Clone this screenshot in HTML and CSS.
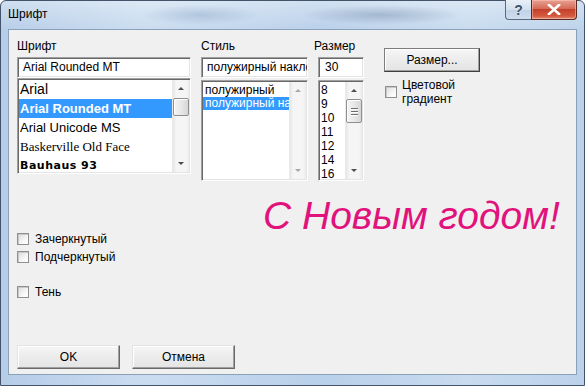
FILE: index.html
```html
<!DOCTYPE html>
<html lang="ru">
<head>
  <meta charset="UTF-8">
  <title>Шрифт</title>
  <link rel="stylesheet" href="styles.css">
</head>
<body>
  <div class="window">
    <div class="titlebar">
      <span class="title">Шрифт</span>
      <div class="caption-buttons">
        <span class="cap-btn help">?</span>
        <span class="cap-btn close">
          <svg width="14" height="11" viewBox="0 0 14 11"><path d="M2 1 L12 10 M12 1 L2 10" stroke="#fff" stroke-width="2.6" stroke-linecap="square"/></svg>
        </span>
      </div>
    </div>

    <div class="client">
      <div class="top-row">
        <!-- font family -->
        <div class="field font-field">
          <div class="label">Шрифт</div>
          <div class="edit">Arial Rounded MT</div>
          <div class="listbox font-list">
            <ul class="items">
              <li class="f-arial">Arial</li>
              <li class="f-rounded selected">Arial Rounded MT</li>
              <li class="f-unicode">Arial Unicode MS</li>
              <li class="f-bask">Baskerville Old Face</li>
              <li class="f-bauhaus">Bauhaus 93</li>
            </ul>
            <div class="scrollbar">
              <span class="arrow up"></span>
              <span class="thumb"></span>
              <span class="track"></span>
              <span class="arrow down"></span>
            </div>
          </div>
        </div>

        <!-- style -->
        <div class="field style-field">
          <div class="label">Стиль</div>
          <div class="edit">полужирный наклонный</div>
          <div class="listbox style-list">
            <ul class="items">
              <li>полужирный</li>
              <li class="selected">полужирный наклонный</li>
            </ul>
            <div class="scrollbar disabled">
              <span class="arrow up"></span>
              <span class="track"></span>
              <span class="arrow down"></span>
            </div>
          </div>
        </div>

        <!-- size -->
        <div class="field size-field">
          <div class="label">Размер</div>
          <div class="edit">30</div>
          <div class="listbox size-list">
            <ul class="items">
              <li>8</li>
              <li>9</li>
              <li>10</li>
              <li>11</li>
              <li>12</li>
              <li>14</li>
              <li>16</li>
            </ul>
            <div class="scrollbar">
              <span class="arrow up"></span>
              <span class="thumb grip"><i></i><i></i><i></i></span>
              <span class="track"></span>
              <span class="arrow down"></span>
            </div>
          </div>
        </div>

        <div class="side">
          <div class="button size-button">Размер...</div>
          <div class="check gradient-check">
            <span class="box"></span>
            <span>Цветовой<br>градиент</span>
          </div>
        </div>
      </div>

      <div class="lower">
        <div class="effects">
          <div class="check"><span class="box"></span><span>Зачеркнутый</span></div>
          <div class="check"><span class="box"></span><span>Подчеркнутый</span></div>
          <div class="check shadow-check"><span class="box"></span><span>Тень</span></div>
        </div>
        <div class="preview">С Новым годом!</div>
      </div>

      <div class="buttons">
        <div class="button">OK</div>
        <div class="button">Отмена</div>
      </div>
    </div>
  </div>
</body>
</html>
```

FILE: styles.css
```css
* {
  box-sizing: border-box;
}
html, body {
  margin: 0;
  padding: 0;
}
body {
  width: 585px;
  height: 386px;
  overflow: hidden;
  background: #fff;
  font-family: "Liberation Sans", Arial, sans-serif;
  font-size: 12px;
  color: #000;
}
.window {
  width: 585px;
  height: 386px;
  display: flex;
  flex-direction: column;
  border: 1px solid #42536a;
  border-radius: 6px 6px 0 0;
  background:
    radial-gradient(ellipse 60px 10px at 200px 14px, rgba(120,150,185,0.35), transparent),
    radial-gradient(ellipse 80px 10px at 380px 14px, rgba(90,115,150,0.35), transparent),
    linear-gradient(to bottom, rgba(255,255,255,0.35), rgba(255,255,255,0) 30px),
    linear-gradient(to right, #b6cde8, #cadcf0 25%, #b9d0ea 55%, #c8dbef 80%, #bcd2ea);
}

/* title bar */
.titlebar {
  height: 28px;
  display: flex;
  align-items: flex-start;
  padding: 0 7px;
}
.title {
  margin-top: 6px;
  line-height: 14px;
  font-size: 12px;
}
.caption-buttons {
  margin-left: auto;
  display: flex;
  height: 20px;
  margin-top: -1px;
}
.cap-btn {
  height: 20px;
  display: flex;
  align-items: center;
  justify-content: center;
  border: 1px solid #5a6b80;
  border-top: none;
}
.help {
  width: 26px;
  border-right: none;
  border-radius: 0 0 0 4px;
  background: linear-gradient(to bottom, #e9eff7, #d3e0ee 50%, #c1d2e6 51%, #cfdded);
  color: #3c4f68;
  font-size: 14px;
  font-weight: bold;
  text-shadow: 0 0 1px #fff;
}
.close {
  width: 46px;
  border-color: #5b2a23;
  border-radius: 0 0 4px 0;
  background: linear-gradient(to bottom, #e8a293, #d66b58 45%, #c3412b 50%, #d45a3f 85%, #e4937a);
  box-shadow: inset 0 0 0 1px rgba(255,200,190,0.5);
}

/* client area */
.client {
  flex: 1;
  margin: 0 7px 10px;
  border: 1px solid #8ba1ba;
  background: #f0f0f0;
  padding: 9px 8px 5px;
  display: flex;
  flex-direction: column;
}
.top-row {
  display: flex;
  align-items: flex-start;
}
.label {
  height: 14px;
  line-height: 14px;
  margin-bottom: 4px;
}
.edit,
.listbox {
  background: #fff;
  border: 1px solid;
  border-color: #a0a0a0 #fff #fff #a0a0a0;
  box-shadow: inset 1px 1px 0 #696969, inset -1px -1px 0 #e3e3e3;
}
.edit {
  height: 21px;
  line-height: 19px;
  padding: 0 5px;
  white-space: nowrap;
  overflow: hidden;
}
.listbox {
  display: flex;
  padding: 1px;
  overflow: hidden;
}
.items {
  list-style: none;
  margin: 0;
  padding: 0;
  flex: 1;
  min-width: 0;
  overflow: hidden;
}
.items li {
  white-space: nowrap;
  overflow: hidden;
}
.items li.selected {
  background: #3399ff;
  color: #fff;
}

.font-field {
  width: 174px;
  margin-right: 10px;
}
.font-list {
  height: 96px;
}
.font-list li {
  height: 19px;
  line-height: 19px;
  padding-left: 1px;
}
.f-arial {
  font-size: 14px;
}
.f-rounded {
  font-size: 13px;
  font-weight: bold;
}
.f-unicode {
  font-size: 13px;
}
.f-bask {
  font-family: "Liberation Serif", serif;
  font-size: 13px;
}
.f-bauhaus {
  font-family: "DejaVu Sans", sans-serif;
  font-size: 11px;
  font-weight: bold;
  letter-spacing: 0.5px;
}

.style-field {
  width: 107px;
  margin-right: 6px;
}
.style-list {
  margin-top: 2px;
  height: 101px;
}
.style-list .items {
  padding-top: 2px;
}
.style-list li {
  line-height: 13px;
  padding-left: 2px;
}

.size-field {
  width: 50px;
}
.size-field .edit,
.size-list {
  margin-left: 4px;
}
.size-field .edit {
  padding: 0 6px;
}
.size-list {
  margin-top: 2px;
  height: 101px;
}
.size-list .items {
  padding-top: 1px;
}
.size-list li {
  line-height: 14px;
  padding-left: 1px;
}

/* scrollbars */
.scrollbar {
  width: 17px;
  flex: none;
  display: flex;
  flex-direction: column;
  background: linear-gradient(to right, #e6e6e6, #f5f5f5 20%, #f5f5f5 80%, #ececec);
  border-left: 1px solid #e9e9e9;
}
.arrow {
  height: 17px;
  flex: none;
  display: flex;
  align-items: center;
  justify-content: center;
}
.arrow::before {
  content: "";
  border-left: 3px solid transparent;
  border-right: 3px solid transparent;
}
.arrow.up::before {
  border-bottom: 3px solid #4d4d4d;
}
.arrow.down::before {
  border-top: 3px solid #4d4d4d;
}
.disabled .arrow.up::before {
  border-bottom-color: #a8a8a8;
}
.disabled .arrow.down::before {
  border-top-color: #a8a8a8;
}
.track {
  flex: 1;
}
.thumb {
  flex: none;
  height: 18px;
  margin: 1px 0 0;
  border: 1px solid #8f8f8f;
  border-radius: 2px;
  background: linear-gradient(to right, #f4f4f4, #e8e8e8 50%, #d6d6d6);
  box-shadow: inset 1px 1px 0 #fff;
}
.thumb.grip {
  height: 24px;
  margin-top: 0;
  display: flex;
  flex-direction: column;
  align-items: center;
  justify-content: center;
  gap: 2px;
}
.grip i {
  display: block;
  width: 7px;
  height: 1px;
  background: #6e6e6e;
  box-shadow: 0 1px 0 #fff;
}

/* right side */
.side {
  margin-left: 20px;
  margin-top: 9px;
}
.button {
  height: 24px;
  line-height: 22px;
  text-align: center;
  border: 1px solid;
  border-color: #e3e3e3 #696969 #696969 #e3e3e3;
  box-shadow: inset -1px -1px 0 #a0a0a0, inset 1px 1px 0 #fff;
  background: linear-gradient(to bottom, #f6f6f6, #ececec 50%, #e4e4e4);
}
.size-button {
  width: 96px;
  border-color: #7d7d7d #3f3f3f #3f3f3f #7d7d7d;
}

/* checkboxes */
.check {
  display: flex;
  align-items: center;
  gap: 6px;
  height: 18px;
  line-height: 14px;
}
.box {
  width: 12px;
  height: 12px;
  flex: none;
  border: 1px solid #8e8f8f;
  background: linear-gradient(135deg, #dcdcdc, #f6f6f6 60%, #fff);
  box-shadow: inset 1px 1px 0 #c8c8c8;
}
.gradient-check {
  height: auto;
  margin-top: 6px;
  margin-left: 1px;
  gap: 5px;
}

/* lower part */
.lower {
  flex: 1;
  display: grid;
  grid-template-columns: 246px 1fr;
}
.effects {
  padding-top: 49px;
}
.shadow-check {
  margin-top: 17px;
}
.preview {
  padding-top: 15px;
  font-size: 39px;
  line-height: 40px;
  font-style: italic;
  color: #e2127c;
  white-space: nowrap;
}

/* bottom buttons */
.buttons {
  display: flex;
  gap: 12px;
}
.buttons .button {
  width: 103px;
}
```
